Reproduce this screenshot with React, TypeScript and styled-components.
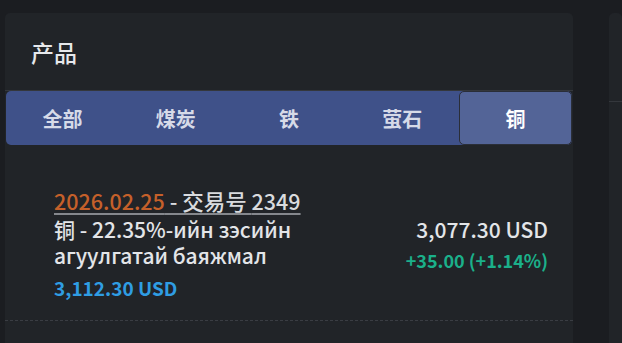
import styled, { createGlobalStyle } from "styled-components";

const GlobalStyle = createGlobalStyle`
  html, body {
    margin: 0;
    background: #1b1d21;
  }
  body {
    font-family: "Noto Sans CJK SC", "Noto Sans", sans-serif;
    color: #e3e5e8;
  }
`;

const Page = styled.div`
  display: grid;
  grid-template-columns: 568px 1fr;
  column-gap: 36px;
  padding: 13px 0 0 5px;
  height: 330px;
  overflow: hidden;
`;

const Card = styled.section`
  background: #212428;
  border-radius: 5px 5px 0 0;
  overflow: hidden;
`;

const CardHeader = styled.header<{ $height: number }>`
  height: ${(p) => p.$height}px;
  display: flex;
  align-items: center;
  padding-left: 26px;
  border-bottom: 1px solid #34373c;
  font-size: 23px;
  font-weight: 500;
  color: #e6e8eb;
`;

const Tabs = styled.nav`
  display: grid;
  grid-template-columns: repeat(5, 1fr);
  margin: 0 1px;
  height: 54px;
  background: #3f5189;
  border-radius: 5px;
`;

const Tab = styled.button<{ $active?: boolean }>`
  border: ${(p) => (p.$active ? "1px solid #2a2e38" : "none")};
  border-radius: 5px;
  background: ${(p) => (p.$active ? "#536497" : "transparent")};
  color: ${(p) => (p.$active ? "#ffffff" : "#d6dae8")};
  font-family: inherit;
  font-size: 20px;
  font-weight: 700;
  padding: 0;
  cursor: pointer;
`;

const Item = styled.article`
  display: flex;
  justify-content: space-between;
  padding: 41px 25px 12px 49px;
  border-bottom: 1px dashed #3a3d43;
`;

const Left = styled.div`
  display: flex;
  flex-direction: column;
`;

const DateLink = styled.a`
  font-size: 21.5px;
  font-weight: 500;
  line-height: 30px;
  color: #d9dbde;
  text-decoration: underline;
  text-decoration-color: #85888d;
  text-underline-offset: 3px;
  align-self: flex-start;
`;

const DateText = styled.span`
  color: #c5602a;
`;

const Name = styled.div`
  font-size: 21px;
  font-weight: 500;
  line-height: 26px;
  color: #e3e5e8;
`;

const Current = styled.div`
  font-size: 19px;
  line-height: 40px;
  font-weight: 600;
  color: #2f9de3;
`;

const Right = styled.div`
  display: flex;
  flex-direction: column;
  align-items: flex-end;
  padding-top: 30px;
`;

const Price = styled.div`
  font-size: 21px;
  font-weight: 500;
  line-height: 26px;
  color: #e3e5e8;
`;

const Change = styled.div`
  font-size: 18px;
  line-height: 36px;
  font-weight: 600;
  color: #1bb08a;
`;

const tabs = ["全部", "煤炭", "铁", "萤石", "铜"];

const items = [
  {
    date: "2026.02.25",
    deal: "2349",
    name: ["铜 - 22.35%-ийн зэсийн", "агуулгатай баяжмал"],
    current: "3,112.30 USD",
    price: "3,077.30 USD",
    change: "+35.00 (+1.14%)",
  },
  {
    date: "2026.02.24",
    deal: "2348",
    name: ["铜 - 22.35%-ийн зэсийн", "агуулгатай баяжмал"],
    current: "3,077.30 USD",
    price: "3,050.10 USD",
    change: "+27.20 (+0.89%)",
  },
];

export default function App() {
  return (
    <>
      <GlobalStyle />
      <Page>
        <Card>
          <CardHeader $height={77}>产品</CardHeader>
          <Tabs>
            {tabs.map((t) => (
              <Tab key={t} $active={t === "铜"}>
                {t}
              </Tab>
            ))}
          </Tabs>
          {items.map((it) => (
            <Item key={it.deal}>
              <Left>
                <DateLink href="#">
                  <DateText>{it.date}</DateText> - 交易号 {it.deal}
                </DateLink>
                <Name>
                  {it.name[0]}
                  <br />
                  {it.name[1]}
                </Name>
                <Current>{it.current}</Current>
              </Left>
              <Right>
                <Price>{it.price}</Price>
                <Change>{it.change}</Change>
              </Right>
            </Item>
          ))}
        </Card>
        <Card>
          <CardHeader $height={88} />
        </Card>
      </Page>
    </>
  );
}
